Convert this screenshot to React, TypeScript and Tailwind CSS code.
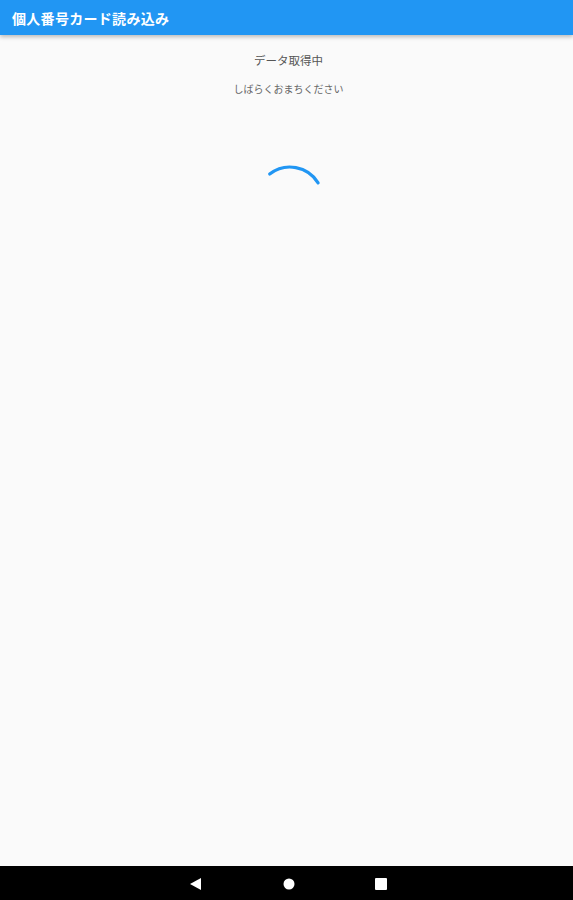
import React from "react";

export default function App() {
  return (
    <div
      className="flex flex-col h-[900px] w-full bg-[#fafafa] overflow-hidden"
      style={{ fontFamily: '"Noto Sans CJK JP", "Noto Sans", sans-serif' }}
    >
      <div className="relative z-10 h-[35px] bg-[#2196f3] flex items-center pl-[12px] shadow-[0_2px_4px_rgba(0,0,0,0.25)] shrink-0">
        <span className="text-white font-bold text-[14px] leading-none tracking-[0.3px]">
          個人番号カード読み込み
        </span>
      </div>
      <div className="flex-1 flex flex-col items-center pl-[4px]">
        <div className="mt-[16px] text-[11.5px] leading-[18px] text-[#555555]">データ取得中</div>
        <div className="mt-[13px] text-[10px] leading-[14px] text-[#666666]">しばらくおまちください</div>
        <svg width="80" height="80" viewBox="0 0 80 80" className="mt-[64px] ml-[2px]">
          <path
            d="M 19.7 14 A 33 33 0 0 1 68.1 22.8"
            fill="none"
            stroke="#2196f3"
            strokeWidth="3.2"
            strokeLinecap="round"
          />
        </svg>
      </div>
      <div className="h-[34px] bg-black flex items-center shrink-0 relative">
        <svg width="573" height="34" viewBox="0 0 573 34" className="block">
          <polygon points="201,12 201,24 190,18" fill="#ffffff" />
          <circle cx="289" cy="18" r="5.5" fill="#ffffff" />
          <rect x="375" y="12" width="12" height="12" rx="1" fill="#ffffff" />
        </svg>
      </div>
    </div>
  );
}
